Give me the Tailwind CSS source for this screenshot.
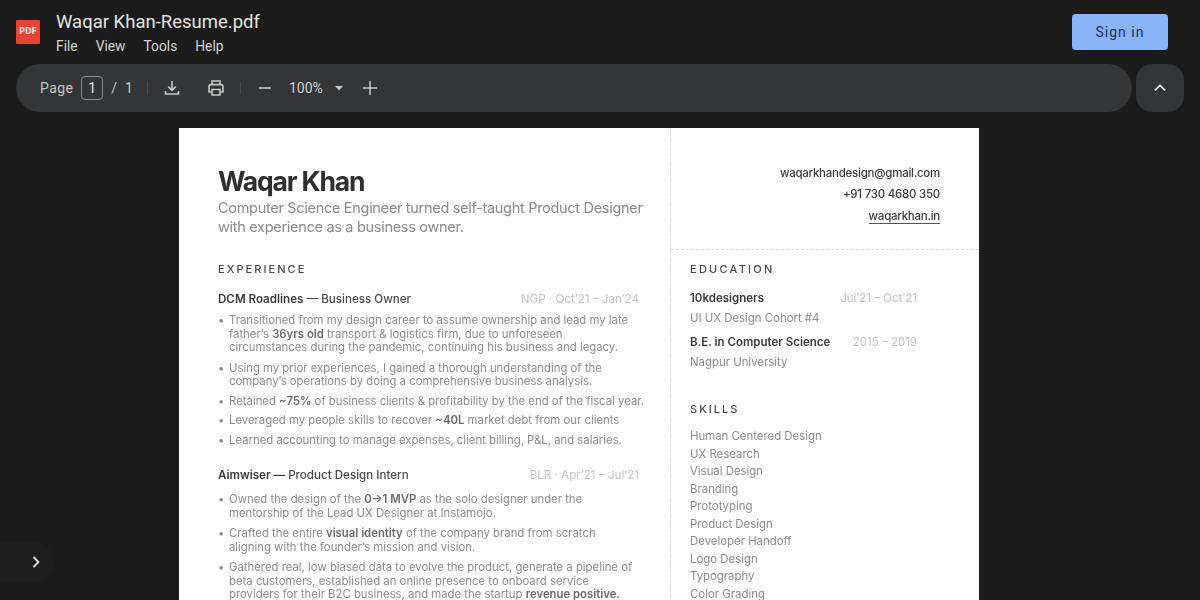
<!DOCTYPE html>
<html><head><meta charset="utf-8"><script src="https://cdn.jsdelivr.net/npm/@tailwindcss/browser@4"></script></head>
<body class="m-0 h-[600px] w-[1200px] overflow-hidden bg-[#1b1b1b] font-['Roboto',sans-serif]">
<div class="relative h-[600px] overflow-hidden">
  <header class="flex h-[64px] items-start">
    <div class="ml-[16px] mt-[20px] flex h-[24px] w-[24px] items-center justify-center rounded-[1px] bg-[#ea4335] font-['DejaVu_Sans',sans-serif] text-[8px] font-bold leading-none text-white/80">PDF</div>
    <div class="ml-[16px] mt-[9px] flex-1">
      <div class="h-[26px] text-[18.5px] leading-[26px] text-[#e3e3e3]">Waqar Khan-Resume.pdf</div>
      <nav class="mt-[1px] flex gap-[18px] text-[13.8px] leading-[20px] text-[#d5d5d5]"><span>File</span><span>View</span><span>Tools</span><span>Help</span></nav>
    </div>
    <button class="mr-[32px] mt-[14px] h-[36px] w-[96px] rounded-[4px] bg-[#8ab4f8] text-[14px] tracking-[1px] text-[#1b2f52]">Sign in</button>
  </header>
  <div class="flex h-[48px] gap-[4px] pl-[16px] pr-[16px]">
    <div class="flex flex-1 items-center rounded-[24px] bg-[#333537] pl-[24px] text-[14px] text-[#c7c7c7]">
      <span class="tracking-[0.4px]">Page</span>
      <span class="ml-[8px] flex h-[24px] w-[22px] items-center justify-center rounded-[4px] border border-[#8e8e8e] text-[#e3e3e3]">1</span>
      <span class="ml-[8px]">/</span><span class="ml-[8px]">1</span>
      <span class="ml-[14px] h-[12px] w-px bg-[#47494b]"></span>
      <svg class="ml-[14px] h-[20px] w-[20px]" viewBox="0 0 20 20" fill="none" stroke="#c7c7c7" stroke-width="1.6"><path d="M10 3v9M6.2 8.6 10 12.4l3.8-3.8M3.5 13v3h13v-3"/></svg>
      <svg class="ml-[24px] h-[20px] w-[20px]" viewBox="0 0 20 20" fill="none" stroke="#c7c7c7" stroke-width="1.6"><path d="M6 6V3h8v3M6 14H3V8.5A2 2 0 0 1 5 6.6h10a2 2 0 0 1 2 1.9V14h-3"/><path d="M6 11.5h8V17H6z"/></svg>
      <span class="ml-[14px] h-[12px] w-px bg-[#47494b]"></span>
      <svg class="ml-[14px] h-[20px] w-[20px]" viewBox="0 0 20 20" stroke="#c7c7c7" stroke-width="1.6"><path d="M4 10h12"/></svg>
      <span class="ml-[14px] w-[36px] whitespace-nowrap text-[#d0d0d0]">100%</span>
      <svg class="ml-[9px] h-[10px] w-[10px]" viewBox="0 0 10 10" fill="#c7c7c7"><path d="M1 3h8L5 7.5z"/></svg>
      <svg class="ml-[16px] h-[20px] w-[20px]" viewBox="0 0 20 20" stroke="#c7c7c7" stroke-width="1.6"><path d="M3 10h14M10 3v14"/></svg>
    </div>
    <div class="flex w-[48px] items-center justify-center rounded-[16px] bg-[#333537]">
      <svg class="h-[20px] w-[20px]" viewBox="0 0 20 20" fill="none" stroke="#e3e3e3" stroke-width="1.8"><path d="M4.8 12.4 10 7.4l5.2 5"/></svg>
    </div>
  </div>
  <main class="ml-[179px] mt-[16px] flex h-[600px] w-[800px] whitespace-nowrap bg-white font-['Inter',sans-serif] text-[#8b8b8b] blur-[0.35px]">
    <section class="w-[492px] border-r border-dashed border-[#dcdcdc] pl-[39px] pr-[27px]">
      <h1 class="mt-[36px] h-[34px] text-[26.5px] font-bold leading-[34px] tracking-[-1.15px] text-[#2f2f2f]">Waqar Khan</h1>
      <p class="text-[14.5px] leading-[19px] tracking-[-0.3px] text-[#8a8a8a]">Computer Science Engineer turned self-taught Product Designer<br>with experience as a business owner.</p>
      <h2 class="mt-[25px] text-[11px] font-medium leading-[16px] tracking-[2.05px] text-[#4a4a4a]">EXPERIENCE</h2>
      <div class="mt-[14px] flex h-[16px] justify-between pr-[4px] text-[11.6px] leading-[16px]"><span class="font-medium text-[#4a4a4a]"><b class="font-semibold text-[#3a3a3a]">DCM Roadlines</b> — Business Owner</span><span class="text-[#c4c4c4]">NGP · Oct’21 – Jan’24</span></div>
      <ul class="mt-[7px] text-[11.35px] leading-[13.5px]">
        <li class="flex"><i class="w-[11px] shrink-0 not-italic">•</i><span>Transitioned from my design career to assume ownership and lead my late<br>father’s <b class="font-semibold text-[#6b6b6b]">36yrs old</b> transport &amp; logistics firm, due to unforeseen<br>circumstances during the pandemic, continuing his business and legacy.</span></li>
        <li class="mt-[7px] flex"><i class="w-[11px] shrink-0 not-italic">•</i><span>Using my prior experiences, I gained a thorough understanding of the<br>company’s operations by doing a comprehensive business analysis.</span></li>
        <li class="mt-[6px] flex"><i class="w-[11px] shrink-0 not-italic">•</i><span>Retained <b class="font-semibold text-[#6b6b6b]">~75%</b> of business clients &amp; profitability by the end of the fiscal year.</span></li>
        <li class="mt-[6px] flex"><i class="w-[11px] shrink-0 not-italic">•</i><span>Leveraged my people skills to recover <b class="font-semibold text-[#6b6b6b]">~40L</b> market debt from our clients</span></li>
        <li class="mt-[6px] flex"><i class="w-[11px] shrink-0 not-italic">•</i><span>Learned accounting to manage expenses, client billing, P&amp;L, and salaries.</span></li>
      </ul>
      <div class="mt-[20px] flex h-[16px] justify-between pr-[4px] text-[11.6px] leading-[16px]"><span class="font-medium text-[#4a4a4a]"><b class="font-semibold text-[#3a3a3a]">Aimwiser —</b> Product Design Intern</span><span class="text-[#c4c4c4]">BLR · Apr’21 – Jul’21</span></div>
      <ul class="mt-[10px] text-[11.35px] leading-[13.5px]">
        <li class="flex"><i class="w-[11px] shrink-0 not-italic">•</i><span>Owned the design of the <b class="font-semibold text-[#6b6b6b]">0→1 MVP</b> as the solo designer under the<br>mentorship of the Lead UX Designer at Instamojo.</span></li>
        <li class="mt-[7px] flex"><i class="w-[11px] shrink-0 not-italic">•</i><span>Crafted the entire <b class="font-semibold text-[#6b6b6b]">visual identity</b> of the company brand from scratch<br>aligning with the founder’s mission and vision.</span></li>
        <li class="mt-[7px] flex"><i class="w-[11px] shrink-0 not-italic">•</i><span>Gathered real, low biased data to evolve the product, generate a pipeline of<br>beta customers, established an online presence to onboard service<br>providers for their B2C business, and made the startup <b class="font-semibold text-[#6b6b6b]">revenue positive.</b></span></li>
      </ul>
    </section>
    <aside class="flex-1">
      <div class="h-[122px] border-b border-dashed border-[#dcdcdc] pr-[39px] pt-[35px] text-right text-[11.5px] font-medium leading-[21.25px] tracking-[-0.25px] text-[#3a3a3a]">
        <div>waqarkhandesign@gmail.com</div><div>+91 730 4680 350</div><div><span class="border-b border-[#555] leading-[14px]">waqarkhan.in</span></div>
      </div>
      <div class="pl-[19px] pr-[62px]">
        <h2 class="mt-[11px] text-[11px] font-medium leading-[16px] tracking-[2.25px] text-[#4a4a4a]">EDUCATION</h2>
        <div class="mt-[13px] flex h-[16px] justify-between text-[11.5px] leading-[16px]"><b class="font-semibold text-[#3a3a3a]">10kdesigners</b><span class="text-[#c4c4c4]">Jul’21 – Oct’21</span></div>
        <div class="mt-[4px] text-[11.4px] leading-[16px]">UI UX Design Cohort #4</div>
        <div class="mt-[8px] flex h-[16px] justify-between text-[11.5px] leading-[16px]"><b class="font-semibold text-[#3a3a3a]">B.E. in Computer Science</b><span class="text-[#c4c4c4]">2015 – 2019</span></div>
        <div class="mt-[4px] text-[11.4px] leading-[16px]">Nagpur University</div>
        <h2 class="mt-[31px] text-[11px] font-medium leading-[16px] tracking-[2.05px] text-[#4a4a4a]">SKILLS</h2>
        <ul class="mt-[11px] text-[11.4px] leading-[17.5px]"><li>Human Centered Design</li><li>UX Research</li><li>Visual Design</li><li>Branding</li><li>Prototyping</li><li>Product Design</li><li>Developer Handoff</li><li>Logo Design</li><li>Typography</li><li>Color Grading</li></ul>
      </div>
    </aside>
  </main>
  <button class="absolute bottom-[18px] left-0 flex h-[40px] w-[54px] items-center justify-center rounded-r-[20px] bg-[#1e1e1e]">
    <svg class="ml-[18px] h-[16px] w-[16px]" viewBox="0 0 16 16" fill="none" stroke="#e3e3e3" stroke-width="1.8"><path d="M5.5 3 10.5 8l-5 5"/></svg>
  </button>
</div>
</body></html>
